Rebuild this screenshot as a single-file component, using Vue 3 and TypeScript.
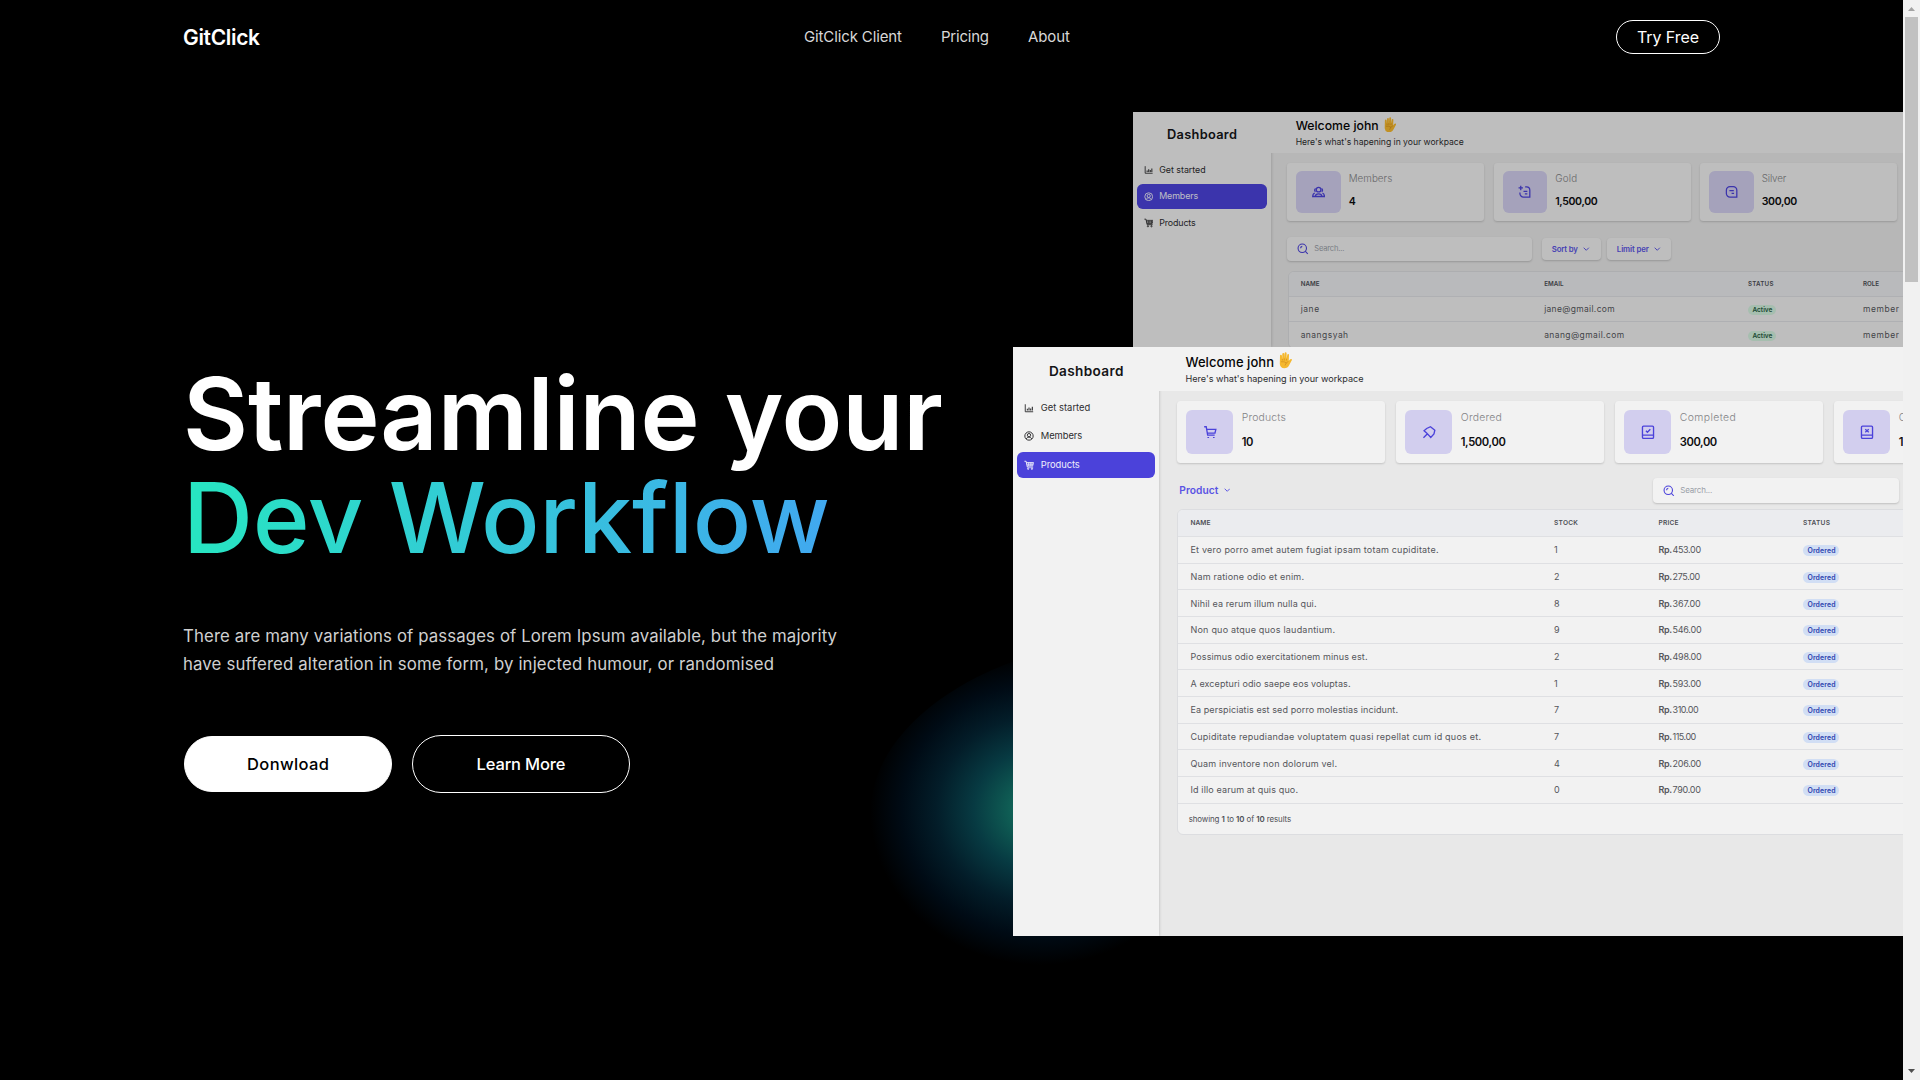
<script setup lang="ts">
interface Fitted {
  text: string
  w: number
}
interface Stat {
  icon: string
  label: Fitted
  value: Fitted
}
interface Cell {
  kind: 'text' | 'price' | 'badge'
  text: string
  w: number
}
interface Panel {
  id: string
  title: number
  menu: (Fitted & { icon: string })[]
  active: string
  welcome: number
  sub: number
  stats: Stat[]
  heads: Fitted[]
  rows: Cell[][]
}

// Spreads the letters of a text over a given width in pixels.
const vFit = {
  mounted(el: HTMLElement, binding: { value: number }) {
    const count = (el.textContent ?? '').length
    if (count < 2) return
    const range = document.createRange()
    range.selectNodeContents(el)
    const natural = range.getBoundingClientRect().width
    el.style.letterSpacing = `${(binding.value - natural) / (count - 1)}px`
    el.style.marginRight = `${-(binding.value - natural) / (count - 1)}px`
  },
}

const text = (value: string, w: number): Cell => ({ kind: 'text', text: value, w })

const products: [string, number, string, string, number][] = [
  ['Et vero porro amet autem fugiat ipsam totam cupiditate.', 248, '1', '453.00', 28.5],
  ['Nam ratione odio et enim.', 113.5, '2', '275.00', 27.7],
  ['Nihil ea rerum illum nulla qui.', 126, '8', '367.00', 28],
  ['Non quo atque quos laudantium.', 144.5, '9', '546.00', 29],
  ['Possimus odio exercitationem minus est.', 177, '2', '498.00', 29],
  ['A excepturi odio saepe eos voluptas.', 160, '1', '593.00', 28.7],
  ['Ea perspiciatis est sed porro molestias incidunt.', 207.5, '7', '310.00', 26],
  ['Cupiditate repudiandae voluptatem quasi repellat cum id quos et.', 290.5, '7', '115.00', 23.7],
  ['Quam inventore non dolorum vel.', 146.5, '4', '206.00', 28.7],
  ['Id illo earum at quis quo.', 107.5, '0', '790.00', 28.3],
]

const panels: Panel[] = [
  {
    id: 'back',
    title: 70,
    menu: [
      { icon: 'chart', text: 'Get started', w: 46.5 },
      { icon: 'user', text: 'Members', w: 39 },
      { icon: 'cartfill', text: 'Products', w: 36.5 },
    ],
    active: 'Members',
    welcome: 83,
    sub: 168,
    stats: [
      { icon: 'group', label: { text: 'Members', w: 43.5 }, value: { text: '4', w: 7 } },
      { icon: 'noteplus', label: { text: 'Gold', w: 22 }, value: { text: '1,500,00', w: 42.5 } },
      { icon: 'note', label: { text: 'Silver', w: 24.5 }, value: { text: '300,00', w: 35.5 } },
    ],
    heads: [
      { text: 'NAME', w: 19 },
      { text: 'EMAIL', w: 19.5 },
      { text: 'STATUS', w: 25.5 },
      { text: 'ROLE', w: 16 },
    ],
    rows: [
      [text('jane', 18.5), text('jane@gmail.com', 70.5), { kind: 'badge', text: 'Active', w: 20 }, text('member', 36)],
      [text('anangsyah', 47.5), text('anang@gmail.com', 80), { kind: 'badge', text: 'Active', w: 20 }, text('member', 36)],
    ],
  },
  {
    id: 'front',
    title: 74.5,
    menu: [
      { icon: 'chart', text: 'Get started', w: 49.5 },
      { icon: 'user', text: 'Members', w: 41.5 },
      { icon: 'cartfill', text: 'Products', w: 39 },
    ],
    active: 'Products',
    welcome: 88.5,
    sub: 178,
    stats: [
      { icon: 'cart', label: { text: 'Products', w: 44 }, value: { text: '10', w: 11.5 } },
      { icon: 'pin', label: { text: 'Ordered', w: 41 }, value: { text: '1,500,00', w: 45 } },
      { icon: 'bookcheck', label: { text: 'Completed', w: 56 }, value: { text: '300,00', w: 37.5 } },
      { icon: 'bookx', label: { text: 'Canceled', w: 46 }, value: { text: '100,00', w: 37 } },
    ],
    heads: [
      { text: 'NAME', w: 20 },
      { text: 'STOCK', w: 24 },
      { text: 'PRICE', w: 20 },
      { text: 'STATUS', w: 27 },
    ],
    rows: products.map(([name, w, stock, price, pw]): Cell[] => [
      text(name, w),
      text(stock, 5),
      { kind: 'price', text: price, w: pw },
      { kind: 'badge', text: 'Ordered', w: 28 },
    ]),
  },
]

const icons: Record<string, string> = {
  chart:
    '<path d="M3 3v18h19" stroke-width="2.2"/><path d="M8 18v-4M12 18v-7M16 18v-5M20 18V9" stroke-width="2.6"/>',
  user:
    '<circle cx="12" cy="12" r="10"/><circle cx="12" cy="10" r="4"/><path d="M5.5 19c1.500-3.500 4-4 6.500-4s5 .5 6.500 4"/>',
  cartfill:
    '<path d="M1 3h4l3 14h14"/><path d="M5.500 6H23l-2 8H7.500M6.500 10H22M11 6v8M15 6v8M19 6v8" stroke-width="1.900"/><circle cx="10" cy="21" r="1.600"/><circle cx="19" cy="21" r="1.600"/>',
  cart:
    '<path d="M2 2.500h3.500L8 17h12"/><path d="M6.200 7H22l-1.500 6.500H7.300"/><path d="M9 20v2M18.500 20v2" stroke-width="2.800"/>',
  group:
    '<circle cx="12" cy="8" r="4.200"/><path d="M6.500 11.500a3 3 0 0 1 .3-5.500M17.500 11.500a3 3 0 0 0-.3-5.500M6 20.500c0-3.800 2.500-5 6-5s6 1.200 6 5zM5 14.500C3 15 1.500 17 1.300 20.500H6M19 14.500c2 .5 3.500 2.500 3.700 6H18"/>',
  pin:
    '<path d="M14.500 2.500L22 8.500 20.500 15 15 21 11.500 17 7.500 13 3.500 9.500 8 5.500z M8.500 15.500L2.500 21.500"/>',
  bookcheck:
    '<rect x="2.500" y="1.500" width="19" height="21" rx="1.800"/><path d="M2.500 17h19M8.500 9.500l2.500 2.500 5-5"/>',
  bookx:
    '<rect x="2.500" y="1.500" width="19" height="21" rx="1.800"/><path d="M2.500 17h19M9 7l6 5M15 7l-6 5"/>',
  note:
    '<path d="M9 2.500h6a6.500 6.500 0 0 1 6.500 6.500v12.500H9A6.500 6.500 0 0 1 2.500 15V9A6.500 6.500 0 0 1 9 2.500zM8 10h8M12 15h4.500"/>',
  noteplus:
    '<path d="M13 3h2.500a6 6 0 0 1 6 6v12.500H10A6.500 6.500 0 0 1 3.500 15v-2M10 11h7M12.500 15.500H17M5 1v8M1 5h8"/>',
  search:
    '<circle cx="11" cy="11" r="8.800"/><path d="M17.500 17.500L22.500 22.500M7.500 11A3.800 3.800 0 0 1 11 7"/>',
}
const nav: Fitted[] = [
  { text: 'GitClick Client', w: 98 },
  { text: 'Pricing', w: 48 },
  { text: 'About', w: 42 },
]
</script>

<template>
  <div class="screen">
    <div class="page">
      <header class="top">
        <div class="logo"><span v-fit="77">GitClick</span></div>
        <nav class="nav">
          <a v-for="n in nav" :key="n.text"><span v-fit="n.w">{{ n.text }}</span></a>
        </nav>
        <button class="try"><span v-fit="62">Try Free</span></button>
      </header>

      <section class="hero">
        <h1>
          <div class="line one"><span v-fit="760">Streamline your</span></div>
          <div class="line two"><span v-fit="647">Dev Workflow</span></div>
        </h1>
        <p>
          <span v-fit="654">There are many variations of passages of Lorem Ipsum available, but the majority</span><br />
          <span v-fit="591">have suffered alteration in some form, by injected humour, or randomised</span>
        </p>
        <div class="actions">
          <button class="solid"><span v-fit="82">Donwload</span></button>
          <button class="outline"><span v-fit="89">Learn More</span></button>
        </div>
      </section>

      <div class="glow"></div>

      <div v-for="p in panels" :key="p.id" class="window" :class="p.id">
        <aside>
          <div class="title"><span v-fit="p.title">Dashboard</span></div>
          <div v-for="m in p.menu" :key="m.text" class="item" :class="{ active: m.text === p.active }">
            <svg viewBox="0 0 24 24" v-html="icons[m.icon]"></svg>
            <span v-fit="m.w">{{ m.text }}</span>
          </div>
        </aside>
        <div class="main">
          <div class="head">
            <div class="welcome">
              <span v-fit="p.welcome">Welcome john</span>
              <svg class="hand" viewBox="0 0 28 33">
                <path
                  d="M4 7.500Q4 5.500 5.800 5.500T7.800 7.500L8.500 14 8.600 4Q8.700 2 10.600 2T12.500 4V13L13.300 2.500Q13.500.5 15.300.6T17.200 2.800V13.500L18.600 5.500Q19 3.800 20.600 4T22 6.200L21.500 18Q24 13.500 26.500 14T27 17.500L22.500 26Q19.500 32.500 12.500 32.500 4.500 32 3.600 24z"
                  fill="#f5b82e"
                />
                <path d="M8.500 14l.3 3M12.500 13v4M17.200 13.500l-.4 3.500M6 19.500q7-1 11 2.500M21 18.500q-6 3-7 8.500" fill="none" stroke="#d08d1d" stroke-width="1.400" />
              </svg>
            </div>
            <div class="sub"><span v-fit="p.sub">Here's what's hapening in your workpace</span></div>
          </div>
          <div class="stats">
            <div v-for="s in p.stats" :key="s.label.text" class="card">
              <div class="tile"><svg viewBox="0 0 24 24" v-html="icons[s.icon]"></svg></div>
              <div class="figures">
                <div class="label"><span v-fit="s.label.w">{{ s.label.text }}</span></div>
                <div class="value"><span v-fit="s.value.w">{{ s.value.text }}</span></div>
              </div>
            </div>
          </div>
          <div class="tools">
            <div v-if="p.id === 'front'" class="drop">
              <span v-fit="39">Product</span>
              <svg viewBox="0 0 10 6"><path d="M1 1l4 4 4-4" /></svg>
            </div>
            <div class="search">
              <svg viewBox="0 0 24 24" v-html="icons.search"></svg>
              <span v-fit="p.id === 'front' ? 32 : 30">Search...</span>
            </div>
            <template v-if="p.id === 'back'">
              <div class="pick sort">
                <span v-fit="26">Sort by</span>
                <svg viewBox="0 0 10 6"><path d="M1 1l4 4 4-4" /></svg>
              </div>
              <div class="pick">
                <span v-fit="32">Limit per</span>
                <svg viewBox="0 0 10 6"><path d="M1 1l4 4 4-4" /></svg>
              </div>
            </template>
          </div>
          <div class="table">
            <div class="row heads">
              <div v-for="h in p.heads" :key="h.text" class="cell"><span v-fit="h.w">{{ h.text }}</span></div>
            </div>
            <div v-for="(r, i) in p.rows" :key="i" class="row">
              <div v-for="(c, j) in r" :key="j" class="cell">
                <span v-if="c.kind === 'badge'" class="badge"><span v-fit="c.w">{{ c.text }}</span></span>
                <template v-else>
                  <b v-if="c.kind === 'price'"><span v-fit="13.500">Rp.</span></b><span v-fit="c.w">{{ c.text }}</span>
                </template>
              </div>
            </div>
            <div v-if="p.id === 'front'" class="foot">
              <span v-fit="102.500">showing <b>1</b> to <b>10</b> of <b>10</b> results</span>
            </div>
          </div>
        </div>
      </div>
    </div>
    <div class="scrollbar">
      <svg class="arrow up" viewBox="0 0 7 4"><path d="M3.500 0L7 4H0z" /></svg>
      <div class="thumb"></div>
      <svg class="arrow down" viewBox="0 0 7 4"><path d="M3.500 4L7 0H0z" /></svg>
    </div>
  </div>
</template>

<style>
body {
  background: #000;
  overflow: hidden;
}
</style>

<style scoped>
.screen {
  display: flex;
  width: 1920px;
  height: 1080px;
  overflow: hidden;
  background: #000;
  font-family: Inter, "Open Sans", sans-serif;
}
.screen * {
  box-sizing: border-box;
}
.screen span {
  white-space: nowrap;
}
.page {
  position: relative;
  width: 1903px;
  height: 1080px;
  overflow: hidden;
}
svg {
  display: block;
  flex: none;
  fill: none;
  stroke: currentColor;
  stroke-width: 2.3;
}
button {
  display: flex;
  align-items: center;
  justify-content: center;
  padding: 0;
  border: 1px solid #fff;
  background: transparent;
  color: #fff;
  font: 400 16px Inter, sans-serif;
}

/* header */
.top {
  display: grid;
  grid-template-columns: 621px 1fr 104px;
  align-items: center;
  height: 74px;
  padding: 0 183px 0 183px;
}
.logo {
  color: #fff;
  font-size: 21px;
  font-weight: 600;
}
.nav {
  display: flex;
  gap: 39px;
  color: #d8d8d8;
  font-size: 15px;
  line-height: 18px;
  padding-bottom: 1px;
}
.try {
  height: 34px;
  border-radius: 17px;
  padding-bottom: 1px;
}

/* hero */
.hero {
  width: 860px;
  padding: 288px 0 0 183px;
}
h1 {
  margin: 0;
  font-size: 96px;
}
.line {
  height: 104px;
  line-height: 104px;
  width: max-content;
}
.one {
  color: #fff;
  font-size: 100px;
  font-weight: 600;
}
.two {
  width: 647px;
  background: linear-gradient(to right, #27e6c1, #41a8f0);
  -webkit-background-clip: text;
  background-clip: text;
  color: transparent;
  font-size: 97px;
  font-weight: 500;
}
p {
  margin: 52px 0 0;
  color: #d0d0d0;
  font-size: 16.8px;
  line-height: 28px;
}
.actions {
  display: flex;
  align-items: center;
  gap: 20px;
  margin-top: 57px;
  padding-left: 1px;
}
.actions button {
  font-size: 16.5px;
  font-weight: 500;
  padding-bottom: 1px;
}
.solid {
  width: 208px;
  height: 56px;
  border-radius: 28px;
  background: #fff;
  color: #000;
}
.outline {
  width: 218px;
  height: 58px;
  border-radius: 29px;
}
.glow {
  position: absolute;
  left: 870px;
  top: 635px;
  width: 340px;
  height: 330px;
  border-radius: 300px 40px 170px 170px / 180px 40px 150px 150px;
  background: radial-gradient(170px 155px at 170px 175px, #138068 0, #0f5d54 18%, #073a42 39%, #031d29 61%, #000b15 81%, #000 100%);
}

/* product windows */
.window {
  --u: 1px;
  position: absolute;
  right: 0;
  display: flex;
  overflow: hidden;
  background: #e8e8e8;
  color: #2c2c2e;
}
.front {
  top: 347px;
  width: 890px;
  height: 589px;
}
.back {
  --u: 0.943px;
  top: 112px;
  width: 770px;
  height: 235px;
}
.back::after {
  content: "";
  position: absolute;
  inset: 0;
  background: rgba(0, 0, 0, 0.21);
}
aside {
  flex: none;
  width: calc(var(--u) * 146.3);
  padding: 0 calc(var(--u) * 4);
  background: #f2f2f2;
  box-shadow: 0 0 3px rgba(0, 0, 0, 0.22);
}
.title {
  display: flex;
  align-items: center;
  justify-content: center;
  height: calc(var(--u) * 48);
  padding-bottom: 1px;
  font-size: calc(var(--u) * 13.6);
  font-weight: 600;
  color: #151517;
}
.item {
  display: flex;
  align-items: center;
  gap: calc(var(--u) * 6.5);
  height: calc(var(--u) * 26);
  margin-bottom: calc(var(--u) * 2.4);
  padding-left: calc(var(--u) * 7.3);
  border-radius: calc(var(--u) * 6);
  font-size: calc(var(--u) * 9.4);
}
.item span {
  margin-top: -1px;
}
.item svg {
  width: calc(var(--u) * 10);
  height: calc(var(--u) * 10);
}
.item.active {
  background: #4b42da;
  color: #efeffb;
}
.main {
  flex: none;
  width: 1000px;
}
.head {
  height: calc(var(--u) * 43.7);
  padding: calc(var(--u) * 5) 0 0 calc(var(--u) * 26.2);
  background: #f2f2f2;
}
.welcome {
  display: flex;
  align-items: center;
  gap: calc(var(--u) * 4.5);
  height: calc(var(--u) * 19);
  color: #050505;
  font-size: calc(var(--u) * 13);
  font-weight: 500;
}
.hand {
  width: calc(var(--u) * 14);
  height: calc(var(--u) * 16.5);
  margin-top: calc(var(--u) * -2);
  stroke: none;
}
.sub {
  height: calc(var(--u) * 16);
  line-height: calc(var(--u) * 16);
  font-size: calc(var(--u) * 9.1);
}
.stats {
  display: flex;
  gap: calc(var(--u) * 10.4);
  padding: calc(var(--u) * 10.6) 0 0 calc(var(--u) * 17.4);
}
.card {
  display: flex;
  flex: none;
  align-items: center;
  gap: calc(var(--u) * 8.5);
  width: calc(var(--u) * 208.6);
  height: calc(var(--u) * 61.7);
  padding-left: calc(var(--u) * 9.3);
  border-radius: calc(var(--u) * 3.5);
  background: #f2f2f2;
  box-shadow: 0 1px 2px rgba(0, 0, 0, 0.16);
}
.tile {
  display: flex;
  align-items: center;
  justify-content: center;
  width: calc(var(--u) * 47.3);
  height: calc(var(--u) * 44);
  border-radius: calc(var(--u) * 6);
  background: #d2ceee;
  color: #4b42da;
}
.tile svg {
  width: calc(var(--u) * 14);
  height: calc(var(--u) * 14.5);
}
.label {
  height: calc(var(--u) * 24.5);
  line-height: calc(var(--u) * 24.5);
  margin-top: calc(var(--u) * -4);
  color: #838386;
  font-size: calc(var(--u) * 10.4);
  font-weight: 300;
}
.value {
  height: calc(var(--u) * 23);
  line-height: calc(var(--u) * 23);
  color: #0c0c0e;
  font-size: calc(var(--u) * 11.2);
  font-weight: 600;
}
.tools {
  display: flex;
  align-items: center;
  height: 25px;
  margin: 15px 0 6.3px 17.4px;
}
.drop,
.pick {
  display: flex;
  align-items: center;
  gap: 5.500px;
  color: #5a54e4;
  font-size: 10.200px;
  font-weight: 600;
}
.drop {
  width: 476.600px;
  padding-left: 2.600px;
}
.drop svg,
.pick svg {
  width: 6.500px;
  height: 4px;
  stroke-width: 1.500;
}
.search {
  display: flex;
  align-items: center;
  gap: 5.500px;
  width: 246px;
  height: 25px;
  padding-left: 10px;
  border-radius: 4px;
  background: #f2f2f2;
  box-shadow: 0 1px 2px rgba(0, 0, 0, 0.18);
  color: #9a9fa8;
  font-size: calc(var(--u) * 8);
}
.search svg {
  width: 11.500px;
  height: 11.500px;
  color: #4b42da;
}
.pick {
  height: 22.500px;
  width: 64px;
  padding-left: 10px;
  border-radius: 4px;
  background: #f2f2f2;
  box-shadow: 0 1px 2px rgba(0, 0, 0, 0.18);
  font-size: 7.800px;
}
.pick.sort {
  width: 59px;
  margin: 0 6px 0 9.500px;
}
.table {
  margin-left: 18.200px;
  border: 1px solid #dcdde0;
  border-radius: 6px;
  background: #f2f2f2;
  overflow: hidden;
}
.row {
  display: grid;
  grid-template-columns: 363.500px 104.600px 144.400px 1fr;
  align-items: center;
  height: calc(var(--u) * 26.7);
  border-bottom: 1px solid #dfe0e3;
  color: #55565b;
  font-size: calc(var(--u) * 9);
}
.cell {
  padding-left: 12px;
}
.heads {
  background: #ebecef;
  color: #4d4f55;
  font-size: calc(var(--u) * 6.6);
  font-weight: 600;
}
.cell b {
  font-weight: 600;
  margin-right: 0.5px;
}
.badge {
  display: flex;
  align-items: center;
  justify-content: center;
  width: 36px;
  height: 11px;
  margin: 2px 0 0 0.5px;
  border-radius: 6px;
  background: #d1def4;
  color: #2c3fae;
  font-size: 6.900px;
  font-weight: 600;
}
.foot {
  display: flex;
  align-items: center;
  height: 30px;
  padding-left: 10.200px;
  color: #4d4f55;
  font-size: 7.900px;
  white-space: pre;
}
.foot b {
  font-weight: 600;
}

.back .head {
  height: 40.700px;
}
.back .tools {
  height: 24px;
  margin: 16px 0 10.300px 16.400px;
}
.back .search {
  width: 245px;
  height: 24px;
}
.back .table {
  margin-left: 17px;
}
.back .row {
  grid-template-columns: 243.500px 203.800px 115px 1fr;
}
.back .cell {
  padding-left: 11.700px;
}
.back .badge {
  width: 28px;
  height: 10px;
  background: #d3f2df;
  color: #255c3e;
  font-size: 6.500px;
}

/* scrollbar */
.scrollbar {
  display: flex;
  flex-direction: column;
  align-items: center;
  width: 17px;
  height: 1080px;
  background: #f1f1f1;
}
.thumb {
  width: 13px;
  height: 265px;
  background: #c1c1c1;
}
.arrow {
  width: 7px;
  height: 4px;
  stroke: none;
}
.up {
  margin: 7px 0 6px;
  fill: #a3a3a3;
}
.down {
  margin: auto 0 7px;
  fill: #505050;
}
</style>
